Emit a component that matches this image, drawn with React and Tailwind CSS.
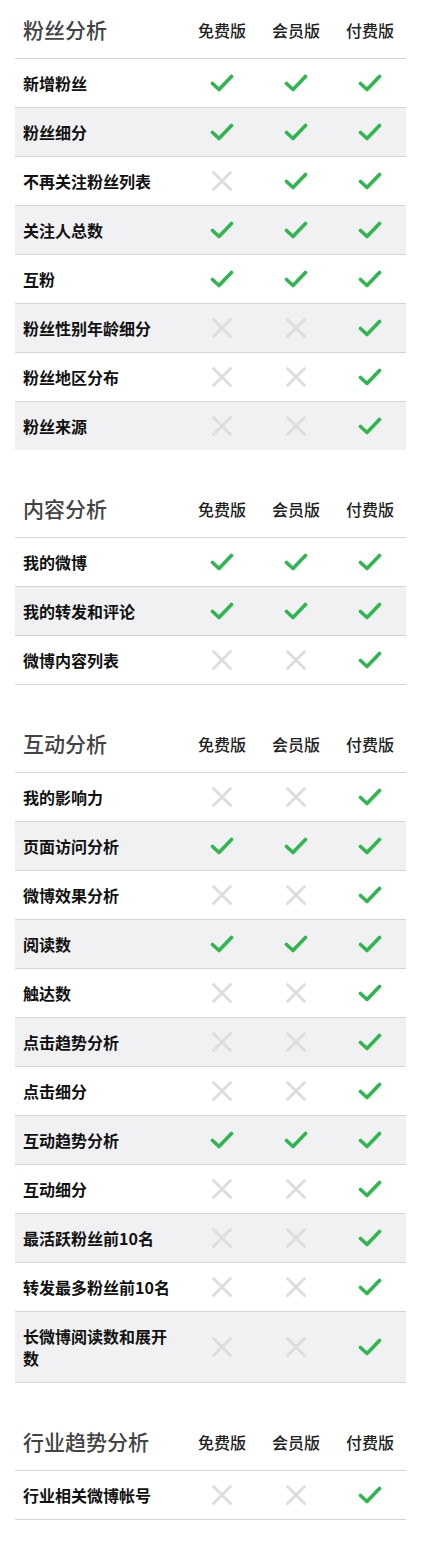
import React from "react";

const sections = [
  {
    title: "粉丝分析",
    lastBorder: false,
    rows: [
      ["新增粉丝", 1, 1, 1],
      ["粉丝细分", 1, 1, 1],
      ["不再关注粉丝列表", 0, 1, 1],
      ["关注人总数", 1, 1, 1],
      ["互粉", 1, 1, 1],
      ["粉丝性别年龄细分", 0, 0, 1],
      ["粉丝地区分布", 0, 0, 1],
      ["粉丝来源", 0, 0, 1],
    ],
  },
  {
    title: "内容分析",
    lastBorder: true,
    rows: [
      ["我的微博", 1, 1, 1],
      ["我的转发和评论", 1, 1, 1],
      ["微博内容列表", 0, 0, 1],
    ],
  },
  {
    title: "互动分析",
    lastBorder: true,
    rows: [
      ["我的影响力", 0, 0, 1],
      ["页面访问分析", 1, 1, 1],
      ["微博效果分析", 0, 0, 1],
      ["阅读数", 1, 1, 1],
      ["触达数", 0, 0, 1],
      ["点击趋势分析", 0, 0, 1],
      ["点击细分", 0, 0, 1],
      ["互动趋势分析", 1, 1, 1],
      ["互动细分", 0, 0, 1],
      ["最活跃粉丝前10名", 0, 0, 1],
      ["转发最多粉丝前10名", 0, 0, 1],
      ["长微博阅读数和展开数", 0, 0, 1],
    ],
  },
  {
    title: "行业趋势分析",
    lastBorder: true,
    rows: [["行业相关微博帐号", 0, 0, 1]],
  },
];

const plans = ["免费版", "会员版", "付费版"];

function Check() {
  return (
    <svg width="24" height="20" viewBox="0 0 24 20" fill="none">
      <path
        d="M2.5 10.5 L9 16.5 L21.5 3.5"
        stroke="#2fb64f"
        strokeWidth="3.6"
        strokeLinecap="round"
        strokeLinejoin="round"
      />
    </svg>
  );
}

function Cross() {
  return (
    <svg width="22" height="22" viewBox="0 0 22 22" fill="none">
      <path
        d="M2.5 2.5 L19.5 19.5 M19.5 2.5 L2.5 19.5"
        stroke="#dddddd"
        strokeWidth="3"
        strokeLinecap="round"
      />
    </svg>
  );
}

function Section({ title, rows, lastBorder }) {
  return (
    <section className="mt-[29px] first:mt-0">
      {/* header */}
      <div className="grid grid-cols-[170px_74px_74px_74px] h-[59px] items-center border-b border-[#d4d4d4]">
        <h2 className="pl-[8px] pt-[2px] text-[21px] font-medium text-[#444]">{title}</h2>
        {plans.map((p) => (
          <div key={p} className="text-center pt-[2px] text-[16px] font-medium text-[#222]">
            {p}
          </div>
        ))}
      </div>

      {rows.map(([name, ...flags], i) => {
        const isLast = i === rows.length - 1;
        return (
          <div
            key={name}
            className={`grid grid-cols-[170px_74px_74px_74px] items-center ${
              i % 2 === 1 ? "bg-[#f1f1f3]" : "bg-white"
            } ${isLast && !lastBorder ? "" : "border-b border-[#d4d4d4]"}`}
          >
            <div className="pl-[8px] pr-[14px] py-[13px] text-[16px] leading-[22px] font-bold text-[#111]">
              {name}
            </div>
            {flags.map((f, j) => (
              <div key={j} className="flex justify-center">
                {f ? <Check /> : <Cross />}
              </div>
            ))}
          </div>
        );
      })}
    </section>
  );
}

export default function App() {
  return (
    <div
      className="min-h-[1541px] bg-white px-[15px]"
      style={{ fontFamily: '"Noto Sans CJK SC", "Noto Sans", sans-serif' }}
    >
      {sections.map((s) => (
        <Section key={s.title} {...s} />
      ))}
    </div>
  );
}
